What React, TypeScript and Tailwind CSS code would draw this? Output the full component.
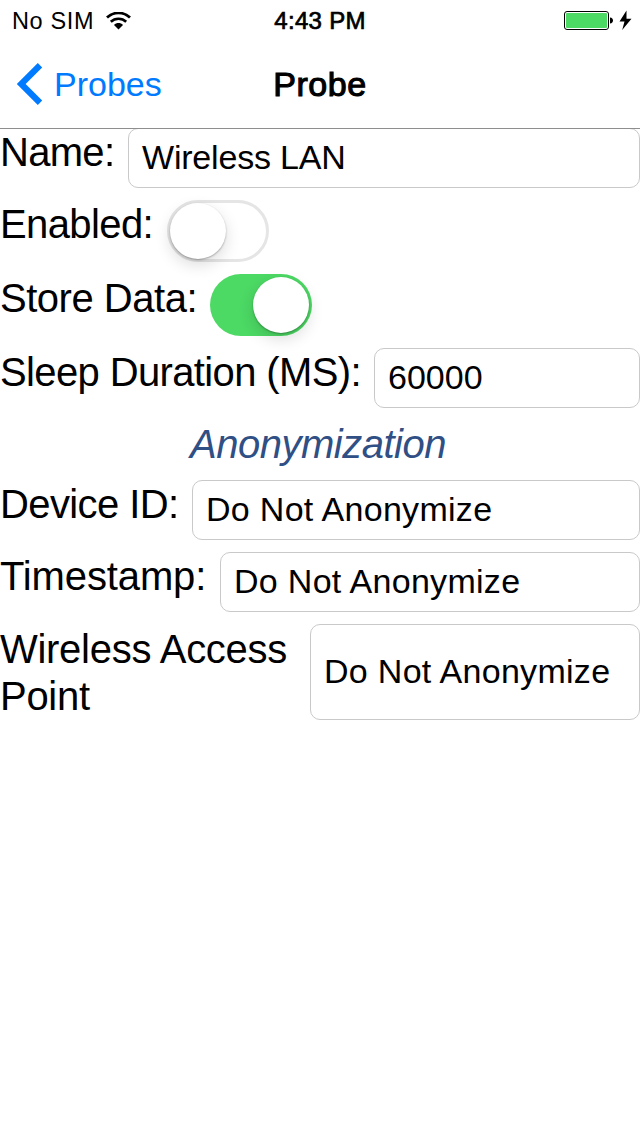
import type { ReactNode } from "react";

function Label({ children, className = "" }: { children: ReactNode; className?: string }) {
  return (
    <div className={`shrink-0 whitespace-nowrap text-[40px] leading-[47px] ${className}`}>
      {children}
    </div>
  );
}

function Field({ children, className = "tracking-[0.3px]" }: { children: ReactNode; className?: string }) {
  return (
    <div
      className={`flex flex-1 items-center whitespace-nowrap rounded-[10px] border border-[#c9c9c9] pb-0.5 pl-[13px] text-[34px] leading-[38px] ${className}`}
    >
      {children}
    </div>
  );
}

function Switch({ on }: { on: boolean }) {
  return (
    <div
      role="switch"
      aria-checked={on}
      className={
        on
          ? "flex h-[62px] w-[102px] items-center justify-end rounded-full bg-[#4cd964] pr-[3px]"
          : "flex h-[62px] w-[102px] items-center rounded-full border-[3px] border-[#e5e5e5] bg-white"
      }
    >
      <div className="size-14 rounded-full bg-white shadow-[0_1px_2px_rgba(0,0,0,0.3),0_6px_16px_rgba(0,0,0,0.14)]" />
    </div>
  );
}

function StatusBar() {
  return (
    <div className="flex h-10 items-center pt-0.5">
      <div className="flex flex-1 items-center pl-3">
        <span className="text-[23.5px] leading-7 tracking-[0.65px]">No SIM</span>
        <svg className="ml-3 h-[18px] w-[25px]" viewBox="0 0 25 18" fill="none" stroke="#000">
          <path d="M1 5.600C7.500-.6 17.500-.6 24 5.600" strokeWidth="2.800" />
          <path d="M4.800 9.800c4.300-4.100 11.100-4.100 15.400 0" strokeWidth="2.600" />
          <path d="M8 12.900c2.600-2.600 6.400-2.600 9 0L12.500 17.400z" fill="#000" stroke="none" />
        </svg>
      </div>
      <span className="text-[24px] leading-7 tracking-[0.3px] [-webkit-text-stroke:0.7px_#000]">4:43 PM</span>
      <div className="flex flex-1 items-center justify-end pl-1 pr-2">
        <svg className="h-[22px] w-[70px]" viewBox="0 0 70 22">
          <rect x="2.500" y="1.500" width="44" height="18" rx="2.500" fill="#fff" stroke="#000" />
          <rect x="4" y="3" width="41" height="15" rx="1" fill="#4cd964" />
          <path d="M48 7.500c4 0 4 6 0 6z" />
          <path d="M64.500 .5L57.500 11.500h5l-2.300 8.500 9.300-11.200h-5z" />
        </svg>
      </div>
    </div>
  );
}

export default function App() {
  return (
    <div className="h-[1136px] w-[640px] overflow-hidden bg-white font-['Liberation_Sans',Arial,sans-serif] text-black">
      <header className="relative h-32 shadow-[0_1px_0_#8e8e8e]">
        <StatusBar />
        <nav className="grid h-[88px] grid-cols-3 items-center">
          <div className="flex items-center pl-4 text-[#007aff]">
            <svg className="h-[42px] w-[27px]" viewBox="0 0 27 42" fill="none" stroke="currentColor" strokeWidth="6.200">
              <path d="M24 2.200L5.200 21 24 39.800" />
            </svg>
            <span className="ml-[11px] text-[34px] leading-[38px]">Probes</span>
          </div>
          <h1 className="text-center text-[34px] leading-[38px] tracking-[0.6px] [-webkit-text-stroke:1.100px_#000]">Probe</h1>
        </nav>
      </header>
      <main className="flex flex-col gap-3">
        <div className="flex h-[60px]">
          <Label className="w-32 pt-px tracking-[-0.7px]">Name:</Label>
          <Field className="tracking-[-0.2px]">Wireless LAN</Field>
        </div>
        <div className="flex h-[62px]">
          <Label className="w-[167px] pt-px tracking-[-0.6px]">Enabled:</Label>
          <Switch on={false} />
        </div>
        <div className="flex h-[62px]">
          <Label className="w-[210px] pt-px tracking-[-0.48px]">Store Data:</Label>
          <Switch on />
        </div>
        <div className="flex h-[60px]">
          <Label className="w-[374px] pt-px tracking-[-0.63px]">Sleep Duration (MS):</Label>
          <Field className="tracking-normal">60000</Field>
        </div>
        <h2 className="h-12 pr-1 pt-px text-center text-[40px] italic leading-[47px] tracking-[-0.5px] text-[#2f4f85]">
          Anonymization
        </h2>
        <div className="flex h-[60px]">
          <Label className="w-48 pt-px tracking-[-0.6px]">Device ID:</Label>
          <Field>Do Not Anonymize</Field>
        </div>
        <div className="flex h-[60px]">
          <Label className="w-[220px] pt-px tracking-[-0.12px]">Timestamp:</Label>
          <Field>Do Not Anonymize</Field>
        </div>
        <div className="flex h-24">
          <Label className="w-[310px] pt-0.5 tracking-[-0.28px]">
            Wireless Access
            <br />
            Point
          </Label>
          <Field>Do Not Anonymize</Field>
        </div>
      </main>
    </div>
  );
}
